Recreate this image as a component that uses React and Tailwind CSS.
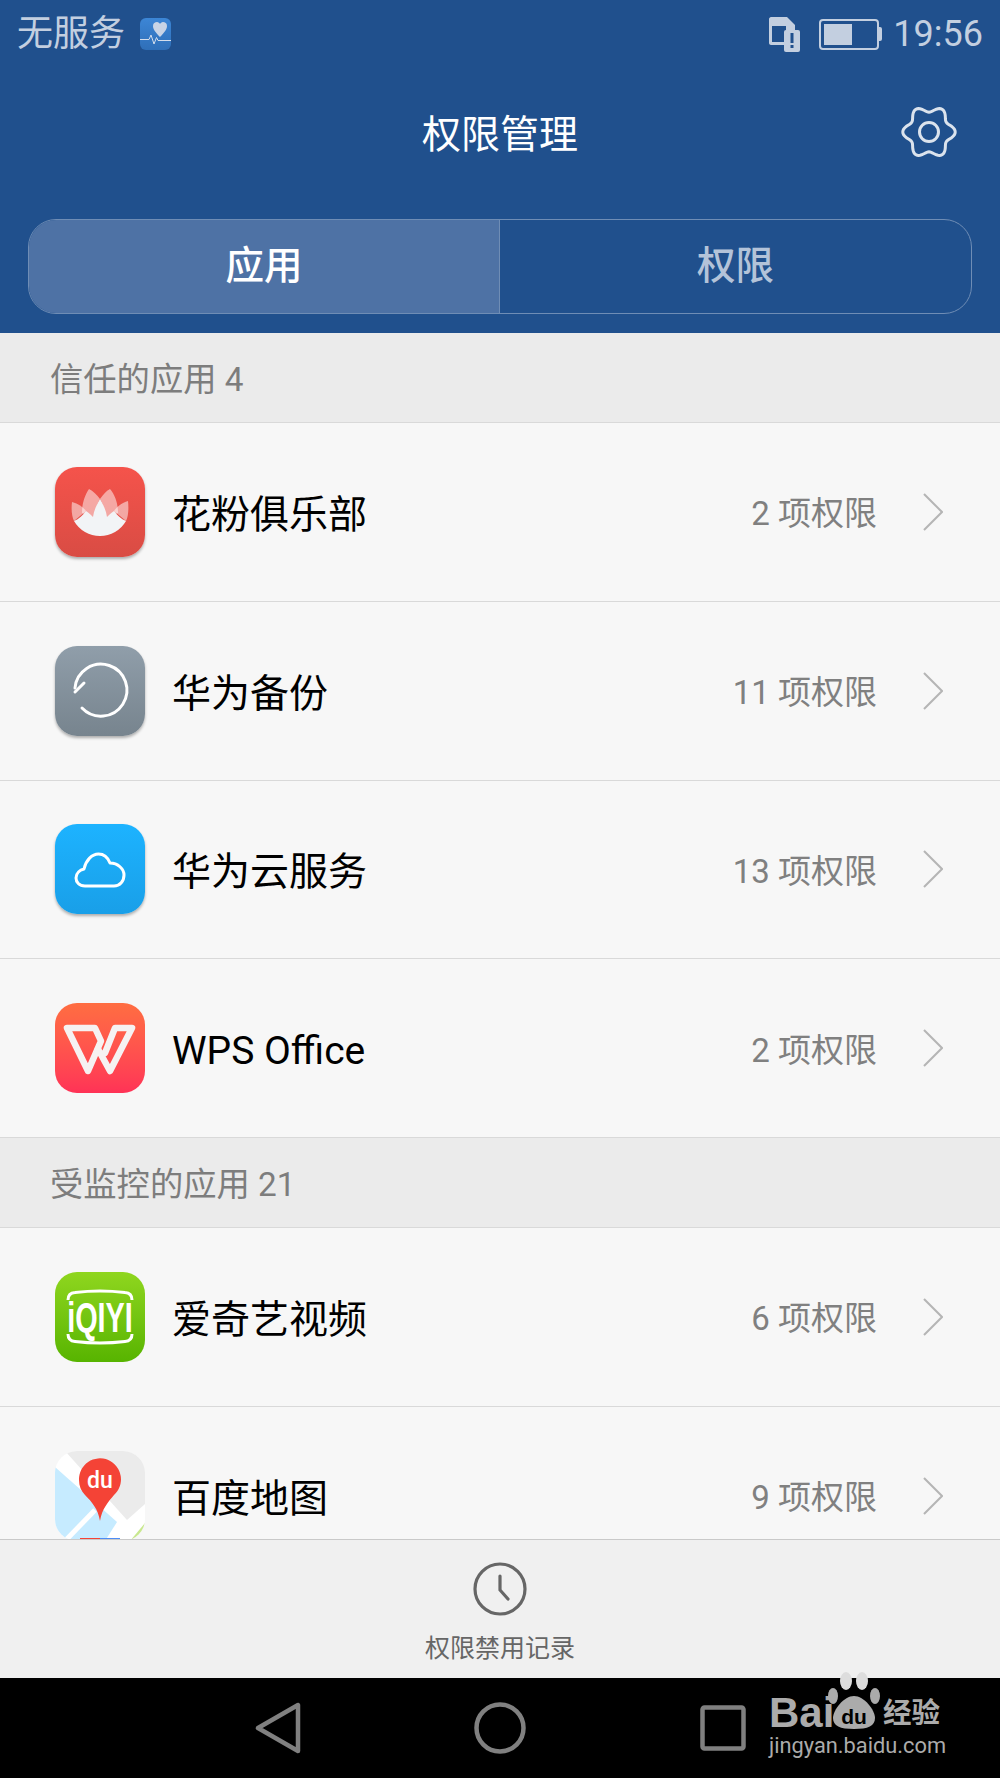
import React from 'react';

const cjk = "font-['Roboto','Noto_Sans_CJK_SC',sans-serif]";

// six rounded lobes, same outline as the system settings glyph
const gearPath = () => {
    const pts = [];
    for (let i = 0; i < 120; i++) {
        const a = (i / 120) * Math.PI * 2;
        const r = 23 + 3.2 * Math.cos(6 * a);
        pts.push(`${(30 + r * Math.cos(a)).toFixed(2)} ${(30 + r * Math.sin(a)).toFixed(2)}`);
    }
    return `M${pts.join('L')}Z`;
};

const Lotus = () => (
    <svg viewBox="0 0 90 90" className="w-[90px] h-[90px]">
        <g fill="#fff" fillOpacity="0.5">
            <path d="M34 22C30 28 27 36 27 46L40 52C40 42 43 35 45 32C42 28 38 24 34 22Z" />
            <path d="M55 22C60 28 63 36 63 46L50 52C50 42 47 35 45 32C48 28 51 24 55 22Z" />
            <path d="M17 35C16 43 17 50 19 54L31 44C29 41 24 37 17 35Z" />
            <path d="M73 34C74 43 73 50 71 54L59 44C61 41 66 36 73 34Z" />
        </g>
        <path fill="#f2f4f6" d="M19 54C24 52 28 48 31 44C34 46 36 48 38 50C39 43 42 37 45 32C48 37 51 43 52 50C54 48 56 46 59 44C62 48 66 52 71 54A30 30 0 0 1 19 54Z" />
    </svg>
);

const Backup = () => (
    <svg viewBox="0 0 90 90" className="w-[90px] h-[90px]" fill="none" stroke="#fff" strokeWidth="3" strokeLinecap="round">
        <path d="M27 62A26 26 0 1 0 20 42" />
        <path d="M20 46L29 37" />
    </svg>
);

const Cloud = () => (
    <svg viewBox="0 0 90 90" className="w-[90px] h-[90px]" fill="none" stroke="#fff" strokeWidth="3" strokeLinejoin="round">
        <path d="M30 62C24 62 21 58 21 54C21 49 25 46 29 45C31 36 37 30 43.5 30C49 30 53 34 55 39C63 39 69 45 69 51C69 57 65 62 59 62Z" />
    </svg>
);

const Wps = () => (
    <svg viewBox="0 0 90 90" className="w-[90px] h-[90px]" fill="none" stroke="#f6f2f2" strokeWidth="6.5" strokeLinejoin="round" strokeLinecap="round">
        <path d="M12 25H40L46 38L33 68Z" />
        <path d="M43 46L55 68L77 25H60L50 50" />
    </svg>
);

const Iqiyi = () => (
    <svg viewBox="0 0 90 90" className="w-[90px] h-[90px]">
        <path d="M13 28Q13 21 20 20.5Q45 17.5 70 20.5Q77 21 77 28" fill="none" stroke="#fff" strokeWidth="3" />
        <path d="M13 62Q13 69 20 69.5Q45 72.5 70 69.5Q77 69 77 62" fill="none" stroke="#fff" strokeWidth="3" />
        <text transform="translate(45 60) scale(0.67 1)" textAnchor="middle" fill="#fff" fontSize="43" fontWeight="700" fontFamily="Liberation Sans, sans-serif">iQIYI</text>
    </svg>
);

const BaiduMap = () => (
    <svg viewBox="0 0 90 90" className="w-[90px] h-[90px]">
        <rect width="90" height="90" fill="#fff" />
        <path d="M10 0H90V53L72 69Z" fill="#ebebeb" />
        <path d="M0 16L62 71L50 90H0Z" fill="#c6ebff" />
        <path d="M90 72L75 90H90Z" fill="#c8e88f" />
        <path d="M40 59L10 90" stroke="#fff" strokeWidth="5" fill="none" />
        <path d="M24 29A21 21 0 1 1 59 44C53 51 47 58 45 70C43 58 37 51 30 44C26 40 24 35 24 29Z" fill="#f44336" />
        <text x="45" y="37" textAnchor="middle" fill="#fff" fontSize="23" fontWeight="500" fontFamily="Roboto, sans-serif">du</text>
        <rect x="25" y="87" width="20" height="3" fill="#f44336" />
        <rect x="45" y="87" width="20" height="3" fill="#4d8cf5" />
    </svg>
);

const Row = ({ icon, iconClass, name, count }) => (
    <div className="h-[178.75px] border-b border-[#d9d9d9] bg-[#f7f7f7] flex items-center pl-[55px] pr-[57px]">
        <div className={`w-[90px] h-[90px] rounded-[22px] overflow-hidden shrink-0 ${iconClass}`}>{icon}</div>
        <div className="ml-[27px] flex-1 pt-[7px] text-[39px] leading-none text-black">{name}</div>
        <div className="pt-[4px] text-[33px] leading-none text-[#808080]">{count} 项权限</div>
        <svg viewBox="0 0 20 38" className="ml-[46px] w-[20px] h-[38px]" fill="none" stroke="#b5b5b5" strokeWidth="2">
            <path d="M1 1L19 19L1 37" />
        </svg>
    </div>
);

const Section = ({ title }) => (
    <div className="h-[90px] border-b border-[#d9d9d9] bg-[#ebebeb] flex items-center pl-[50px] pt-[4px] text-[33.3px] leading-none text-[#7d7d7d]">
        {title}
    </div>
);

const App = () => {
    return (
        <div className={`relative w-[1000px] h-[1778px] flex flex-col overflow-hidden bg-[#f7f7f7] ${cjk}`}>
            <header className="h-[333px] shrink-0 bg-[#20508d]">
                {/* status bar */}
                <div className="h-[68px] flex items-center pl-[17px] pr-[17px] text-[#c3cfe0]">
                    <span className="text-[36px] leading-none">无服务</span>
                    <div className="ml-[15px] w-[31px] h-[32px] rounded-[6px] bg-gradient-to-b from-[#3c86d6] to-[#2f6fb8]">
                        <svg viewBox="0 0 31 32" className="w-[31px] h-[32px]" fill="none">
                            <path d="M20 19C15 14 13 11 13 8C13 5 15 4 17 4C18.5 4 19.5 5 20 6C20.5 5 21.5 4 23 4C25 4 27 5 27 8C27 11 25 14 20 19Z" fill="#c8d4e6" />
                            <path d="M0 21.5H9L11 17L14 26L16.5 19.5L18 22.5H31" stroke="#d4deec" strokeWidth="1" />
                        </svg>
                    </div>
                    <div className="flex-1" />
                    <svg viewBox="0 0 31 35" className="w-[31px] h-[35px]">
                        <path d="M2 0H18L26 8V14H20V22H15V28H2C1 28 0 27 0 26V2C0 1 1 0 2 0Z" fill="#c3cfe0" />
                        <rect x="3" y="9" width="14" height="16" fill="#20508d" />
                        <rect x="15" y="13" width="16" height="22" rx="2" fill="#c3cfe0" />
                        <rect x="21.5" y="16" width="3" height="10" fill="#20508d" />
                        <rect x="21.5" y="28" width="3" height="3" fill="#20508d" />
                    </svg>
                    <div className="ml-[19px] flex items-center">
                        <div className="w-[60px] h-[31px] rounded-[4px] border-2 border-[#c3cfe0] p-[3px] flex">
                            <div className="w-[28px] h-full bg-[#c3cfe0]" />
                        </div>
                        <div className="w-[3px] h-[14px] rounded-r-[2px] bg-[#c3cfe0]" />
                    </div>
                    <span className="ml-[11px] text-[36px] leading-none">19:56</span>
                </div>

                {/* title */}
                <div className="h-[132px] grid grid-cols-[1fr_auto_1fr] items-center">
                    <div />
                    <h1 className="pt-[2px] text-[39px] leading-none font-normal text-white">权限管理</h1>
                    <div className="flex justify-end pr-[41px] pb-[4px]">
                        <svg viewBox="0 0 60 60" className="w-[60px] h-[60px]" fill="none" stroke="#dbe3ed" strokeWidth="3">
                            <path d={gearPath()} />
                            <circle cx="30" cy="30" r="9.5" />
                        </svg>
                    </div>
                </div>

                {/* tabs */}
                <div className="mt-[19px] mx-[28px] h-[95px] rounded-[28px] border border-[#6f8db5] flex overflow-hidden">
                    <div className="w-[470px] bg-[#4e72a5] flex items-center justify-center text-[38.5px] leading-none font-medium text-white">应用</div>
                    <div className="flex-1 border-l border-[#6f8db5] flex items-center justify-center text-[38.5px] leading-none font-medium text-[#b3c3d9]">权限</div>
                </div>
            </header>

            <main className="flex-1 min-h-0 overflow-hidden">
                <Section title="信任的应用 4" />
                <Row icon={<Lotus />} iconClass="bg-gradient-to-b from-[#f5534b] to-[#d94c44] shadow-[0_2px_3px_rgba(0,0,0,0.3)]" name="花粉俱乐部" count="2" />
                <Row icon={<Backup />} iconClass="bg-gradient-to-b from-[#909eaa] to-[#77848e] shadow-[0_2px_3px_rgba(0,0,0,0.3)]" name="华为备份" count="11" />
                <Row icon={<Cloud />} iconClass="bg-gradient-to-b from-[#1db3ff] to-[#199fe8] shadow-[0_2px_3px_rgba(0,0,0,0.3)]" name="华为云服务" count="13" />
                <Row icon={<Wps />} iconClass="bg-gradient-to-b from-[#ff6d41] to-[#ff3256]" name="WPS Office" count="2" />
                <Section title="受监控的应用 21" />
                <Row icon={<Iqiyi />} iconClass="bg-gradient-to-b from-[#8fd61e] to-[#57b400]" name="爱奇艺视频" count="6" />
                <Row icon={<BaiduMap />} iconClass="" name="百度地图" count="9" />
            </main>

            <div className="h-[139px] shrink-0 border-t border-[#c9c9c9] bg-[#f0f0f0] flex flex-col items-center pt-[22px]">
                <svg viewBox="0 0 54 54" className="w-[54px] h-[54px]" fill="none" stroke="#666" strokeWidth="3.2" strokeLinecap="round">
                    <circle cx="27" cy="27" r="25" />
                    <path d="M27 14V28L35 37" />
                </svg>
                <span className="mt-[20px] text-[25px] leading-none text-[#666]">权限禁用记录</span>
            </div>

            <nav className="h-[100px] shrink-0 bg-black flex items-center pl-[255px]">
                <svg viewBox="0 0 46 52" className="w-[46px] h-[52px]" fill="none" stroke="#808080" strokeWidth="4.5" strokeLinejoin="round">
                    <path d="M43 3V49L3 26Z" />
                </svg>
                <svg viewBox="0 0 52 52" className="ml-[173px] w-[52px] h-[52px]" fill="none" stroke="#808080" strokeWidth="4.5">
                    <circle cx="26" cy="26" r="23.5" />
                </svg>
                <svg viewBox="0 0 46 46" className="ml-[174px] w-[46px] h-[46px]" fill="none" stroke="#808080" strokeWidth="4.5" strokeLinejoin="round">
                    <rect x="2.5" y="2.5" width="41" height="41" rx="2" />
                </svg>
            </nav>

            {/* baidu watermark */}
            <div className="absolute left-[769px] top-[1672px] w-[180px] h-[90px] text-[#ababab]">
                <span className="absolute left-0 top-[20px] text-[42px] leading-none font-bold font-['Liberation_Sans',sans-serif]">Bai</span>
                <svg viewBox="0 0 52 58" className="absolute left-[59px] top-0 w-[52px] h-[58px]" fill="#ababab">
                    <ellipse cx="18" cy="9" rx="6" ry="9" fill="#ddd" />
                    <ellipse cx="34" cy="9" rx="6" ry="9" fill="#ddd" />
                    <ellipse cx="5" cy="24" rx="5" ry="8" />
                    <ellipse cx="47" cy="24" rx="5" ry="8" />
                    <path d="M26 24C36 24 47 38 47 46C47 54 40 57 26 57C12 57 5 54 5 46C5 38 16 24 26 24Z" />
                    <text x="26" y="52" textAnchor="middle" fill="#000" fontSize="21" fontWeight="700" fontFamily="Liberation Sans, sans-serif">du</text>
                </svg>
                <span className="absolute left-[114px] top-[28px] text-[28.5px] leading-none font-bold">经验</span>
                <span className="absolute left-0 top-[63px] text-[21.8px] leading-none font-['Roboto',sans-serif]">jingyan.baidu.com</span>
            </div>
        </div>
    );
};

export default App;
